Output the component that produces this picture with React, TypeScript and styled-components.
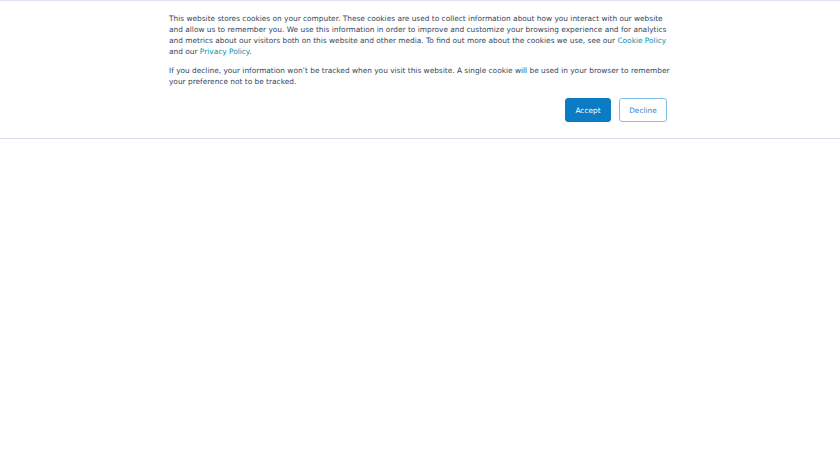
import React from "react";
import styled, { createGlobalStyle } from "styled-components";

const GlobalStyle = createGlobalStyle`
  html, body {
    margin: 0;
    padding: 0;
    background: #ffffff;
  }
`;

const Banner = styled.div`
  box-sizing: border-box;
  width: 100%;
  height: 139px;
  border-top: 1px solid #dfe3f3;
  border-bottom: 1px solid #d9dcf0;
  box-shadow: 0 1px 3px rgba(180, 185, 220, 0.35);
  background: #ffffff;
  font-family: "DejaVu Sans", sans-serif;
`;

const Content = styled.div`
  width: 502px;
  margin: 0 auto;
  padding-top: 12px;
`;

const Paragraph = styled.p`
  margin: 0 0 8px;
  font-size: 7.4px;
  line-height: 11px;
  color: #33475b;
`;

const Link = styled.a`
  color: #0091ae;
  text-decoration: none;
`;

const Buttons = styled.div`
  display: flex;
  justify-content: flex-end;
  gap: 8px;
  margin-top: 11px;
  padding-right: 4px;
`;

const Button = styled.button<{ $primary?: boolean }>`
  box-sizing: border-box;
  height: 24px;
  min-width: ${(p) => (p.$primary ? 46 : 48)}px;
  padding: 0 8px;
  border-radius: 3px;
  font-family: "DejaVu Sans", sans-serif;
  font-size: 7.4px;
  cursor: pointer;
  border: 1px solid ${(p) => (p.$primary ? "#0b7bc4" : "#7fc0ea")};
  background: ${(p) => (p.$primary ? "#0b7bc4" : "#ffffff")};
  color: ${(p) => (p.$primary ? "#ffffff" : "#2f86c7")};
`;

export default function App() {
  return (
    <>
      <GlobalStyle />
      <Banner>
        <Content>
          <Paragraph>
            This website stores cookies on your computer. These cookies are used to collect information about how you interact with our website and allow us to remember you. We use this information in order to improve and customize your browsing experience and for analytics and metrics about our visitors both on this website and other media. To find out more about the cookies we use, see our <Link href="#">Cookie Policy</Link> and our <Link href="#">Privacy Policy</Link>.
          </Paragraph>
          <Paragraph>
            If you decline, your information won’t be tracked when you visit this website. A single cookie will be used in your browser to remember your preference not to be tracked.
          </Paragraph>
          <Buttons>
            <Button $primary>Accept</Button>
            <Button>Decline</Button>
          </Buttons>
        </Content>
      </Banner>
    </>
  );
}
